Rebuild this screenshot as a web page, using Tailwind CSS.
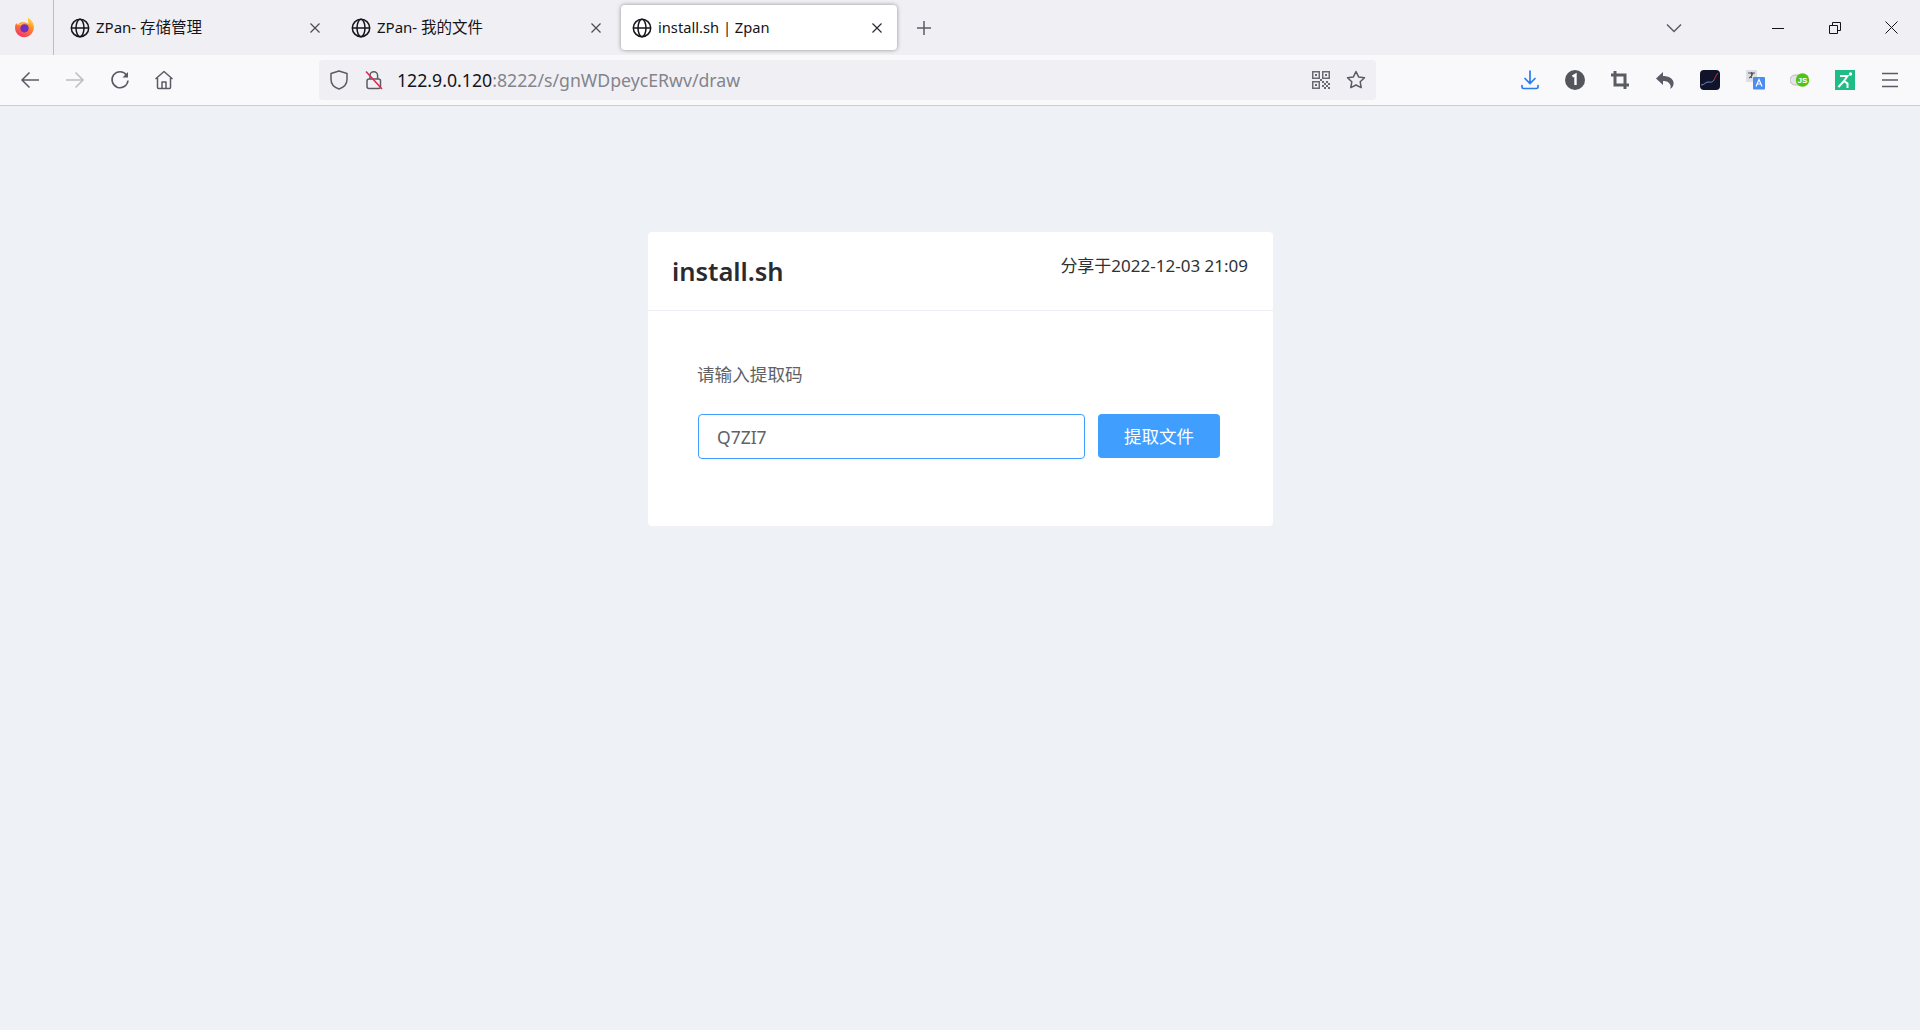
<!DOCTYPE html>
<html lang="en">
<head>
    <meta charset="UTF-8">
    <title>install.sh | Zpan</title>
    <script src="https://cdn.jsdelivr.net/npm/@tailwindcss/browser@4"></script>
</head>
<body class="h-[1030px] overflow-hidden bg-[#eef1f6] font-['Noto_Sans','Noto_Sans_CJK_SC',sans-serif]">
    <!-- tab strip -->
    <div class="flex h-[55px] items-center bg-[#f0f0f4] text-[14.700px] text-[#15141a]">
        <div class="flex h-full w-[54px] shrink-0 items-center justify-center border-r border-[#bdbdc2] pr-[4px]">
            <svg width="21" height="21" viewBox="0 0 20 20">
                <defs>
                    <linearGradient id="fx" x1="0.75" y1="0" x2="0.25" y2="1"><stop offset="0" stop-color="#ffe14a"/><stop offset="0.4" stop-color="#ff8a2a"/><stop offset="1" stop-color="#f2306c"/></linearGradient>
                </defs>
                <path d="M13.500 .5c2.500 1.600 3.800 3.400 4.700 5.500 1 2.400 1 5 0 7.300-1.400 3.500-4.600 5.900-8.400 5.900-4.800 0-8.800-3.800-8.800-8.900 0-1.700.4-3.300 1.200-4.600.3 1 .8 1.600 1.400 2 .6-1.400 2.200-2.400 3.900-2.600 1.800-.3 4.500-.2 6.500 1.700-.4-2-1.200-3.500-.5-6.300z" fill="url(#fx)"/>
                <circle cx="10" cy="10.800" r="3.900" fill="#6f2fc4"/>
                <path d="M3.800 7.300c1.500-1.500 4-2 6.300-1.200-1.800.2-2.900 1-3.200 2-.9.200-2 0-3.100-.8z" fill="#ffb52e"/>
            </svg>
        </div>
        <div class="ml-[5px] flex gap-[5px]">
            <div class="flex h-[45px] w-[276px] items-center pl-[11px] pr-[14px]">
                <svg class="shrink-0" width="20" height="20" viewBox="0 0 20 20" fill="none" stroke="#15141a" stroke-width="1.500"><circle cx="10" cy="10" r="8.700"/><ellipse cx="10" cy="10" rx="4" ry="8.700"/><path d="M1.500 10h17"/></svg>
                <span class="ml-[6px] flex-1 truncate text-[15px]">ZPan- <span class="text-[15.500px]">存储管理</span></span>
                <svg class="shrink-0" width="12" height="12" viewBox="0 0 12 12" stroke="#4a4a50" stroke-width="1.200"><path d="M1.500 1.500l9 9M10.500 1.500l-9 9"/></svg>
            </div>
            <div class="flex h-[45px] w-[276px] items-center pl-[11px] pr-[14px]">
                <svg class="shrink-0" width="20" height="20" viewBox="0 0 20 20" fill="none" stroke="#15141a" stroke-width="1.500"><circle cx="10" cy="10" r="8.700"/><ellipse cx="10" cy="10" rx="4" ry="8.700"/><path d="M1.500 10h17"/></svg>
                <span class="ml-[6px] flex-1 truncate text-[15px]">ZPan- <span class="text-[15.500px]">我的文件</span></span>
                <svg class="shrink-0" width="12" height="12" viewBox="0 0 12 12" stroke="#4a4a50" stroke-width="1.200"><path d="M1.500 1.500l9 9M10.500 1.500l-9 9"/></svg>
            </div>
            <div class="flex h-[45px] w-[276px] items-center rounded-[4px] bg-white pl-[11px] pr-[14px] shadow-[0_0_4px_rgba(0,0,0,0.4)]">
                <svg class="shrink-0" width="20" height="20" viewBox="0 0 20 20" fill="none" stroke="#15141a" stroke-width="1.500"><circle cx="10" cy="10" r="8.700"/><ellipse cx="10" cy="10" rx="4" ry="8.700"/><path d="M1.500 10h17"/></svg>
                <span class="ml-[6px] flex-1 truncate">install.sh | Zpan</span>
                <svg class="shrink-0" width="12" height="12" viewBox="0 0 12 12" stroke="#2b2a33" stroke-width="1.200"><path d="M1.500 1.500l9 9M10.500 1.500l-9 9"/></svg>
            </div>
        </div>
        <svg class="ml-[19px] shrink-0" width="16" height="16" viewBox="0 0 16 16" stroke="#5b5b66" stroke-width="1.500"><path d="M8 1v14M1 8h14"/></svg>
        <svg class="ml-[734px] shrink-0" width="16" height="10" viewBox="0 0 16 10" fill="none" stroke="#5b5b66" stroke-width="1.500"><path d="M1 1.500l7 7 7-7"/></svg>
        <svg class="ml-[90px] shrink-0" width="12" height="12" viewBox="0 0 12 12" stroke="#15141a" stroke-width="1"><path d="M0 6.500h12"/></svg>
        <svg class="ml-[45px] shrink-0" width="12" height="12" viewBox="0 0 12 12" fill="none" stroke="#15141a" stroke-width="1"><path d="M.5 3.500h8v8h-8zM3.500 3V.5h8v8H9"/></svg>
        <svg class="ml-[44px] shrink-0" width="13" height="13" viewBox="0 0 13 13" stroke="#15141a" stroke-width="1"><path d="M.5.500l12 12M12.500.500l-12 12"/></svg>
    </div>

    <!-- toolbar -->
    <div class="flex h-[51px] items-center border-b border-[#cccccf] bg-[#f9f9fb]">
        <div class="flex w-[319px] shrink-0 items-center pl-[20px]">
            <svg width="20" height="20" viewBox="0 0 20 20" fill="none" stroke="#5b5b66" stroke-width="1.500"><path d="M19 10H2M9.500 2.500L2 10l7.500 7.500"/></svg>
            <svg class="ml-[25px]" width="20" height="20" viewBox="0 0 20 20" fill="none" stroke="#bdbdc2" stroke-width="1.500"><path d="M1 10h17M10.500 2.500L18 10l-7.500 7.500"/></svg>
            <svg class="ml-[25px]" width="20" height="20" viewBox="0 0 20 20" fill="none" stroke="#5b5b66" stroke-width="1.600"><path d="M16.500 5A8 8 0 1 0 18 10.500"/><path d="M18 2v5.500h-5.500" fill="#5b5b66" stroke="none"/></svg>
            <svg class="ml-[24px]" width="20" height="20" viewBox="0 0 20 20" fill="none" stroke="#5b5b66" stroke-width="1.500" stroke-linejoin="round"><path d="M1.500 9L10 1.500 18.500 9M3.500 8v9.500a1 1 0 0 0 1 1h11a1 1 0 0 0 1-1V8"/><path d="M8 18.500V12h4v6.500"/></svg>
        </div>
        <div class="flex h-[40px] w-[1057px] shrink-0 items-center rounded-[4px] bg-[#f0f0f4] text-[17.700px] whitespace-nowrap">
            <svg class="ml-[11px] shrink-0" width="18" height="20" viewBox="0 0 18 20" fill="none" stroke="#5b5b66" stroke-width="1.500" stroke-linejoin="round"><path d="M9 1L1 3.500v6c0 4.500 3.500 8 8 9.500 4.500-1.500 8-5 8-9.500v-6z"/></svg>
            <svg class="ml-[17px] shrink-0" width="18" height="20" viewBox="0 0 18 20" fill="none"><path d="M5 9V5.500a3.800 3.800 0 0 1 7.600 0V9" stroke="#5b5b66" stroke-width="1.500"/><rect x="2" y="9" width="13.500" height="9.500" rx="2" stroke="#5b5b66" stroke-width="1.500"/><path d="M1 1.500L17 19" stroke="#e22850" stroke-width="1.600"/></svg>
            <span class="ml-[14px] text-[#15141a]">122.9.0.120<span class="text-[#84848c]">:8222/s/gnWDpeycERwv/draw</span></span>
            <svg class="ml-auto shrink-0" width="18" height="18" viewBox="0 0 18 18" fill="#6a6a72"><path fill-rule="evenodd" d="M0 0h8v8H0zM1.500 1.500v5h5v-5zM10 0h8v8h-8zM11.500 1.500v5h5v-5zM0 10h8v8H0zM1.500 11.500v5h5v-5z"/><path d="M3 3h2v2H3zM13 3h2v2h-2zM3 13h2v2H3zM10 10h2v2h-2zM14 10h2v2h-2zM12 12h2v2h-2zM16 12h2v2h-2zM10 14h2v2h-2zM14 14h2v2h-2zM12 16h2v2h-2zM16 16h2v2h-2zM8 8h2v2H8z"/></svg>
            <svg class="ml-[16px] mr-[10px] shrink-0" width="20" height="20" viewBox="0 0 20 20" fill="none" stroke="#5b5b66" stroke-width="1.500" stroke-linejoin="round"><path d="M10 1.500l2.600 5.400 5.900.8-4.300 4.100 1 5.900L10 15l-5.200 2.700 1-5.900-4.300-4.100 5.900-.8z"/></svg>
        </div>
        <div class="ml-[144px] flex items-center gap-[25px]">
            <svg width="20" height="20" viewBox="0 0 20 20" fill="none" stroke="#2a7cec" stroke-width="1.700" stroke-linecap="round"><path d="M10 1v12M5 8.500l5 5 5-5M2 15.500v1.500a1.500 1.500 0 0 0 1.500 1.500h13a1.500 1.500 0 0 0 1.500-1.500v-1.500"/></svg>
            <svg width="20" height="20" viewBox="0 0 20 20"><circle cx="10" cy="10" r="10" fill="#55555e"/><path d="M7.500 6.500L10.500 4.800V15" fill="none" stroke="#fff" stroke-width="2.400"/></svg>
            <svg width="20" height="20" viewBox="0 0 20 20" fill="none" stroke="#5b5b66" stroke-width="3"><path d="M5 1v14h14M1 5h14v14"/></svg>
            <svg width="20" height="20" viewBox="0 0 20 20" fill="#5b5b66"><path d="M8 2L1 8.500 8 15v-4c3.500 0 6 .8 7.500 4.500.3 1 .2 2.500-.5 3.500 3-1.500 4-4.500 3.500-7C17.500 8 13 6 8 6z"/></svg>
            <svg width="20" height="20" viewBox="0 0 20 20"><rect width="20" height="20" rx="4" fill="#10132a"/><path d="M1 15c4 0 4-3 7-3s4 1 6-2" fill="none" stroke="#6d90c8" stroke-width="1"/><path d="M14 10c1-2 2-5 4-7" fill="none" stroke="#d8352a" stroke-width="1"/></svg>
            <svg width="20" height="20" viewBox="0 0 20 20"><rect x="1" y="0" width="11" height="12" fill="#dfe0e3"/><path d="M3 3h7M6.500 2v6M4 8c2-1 3-2 4-5" fill="none" stroke="#55555e" stroke-width="1.200"/><rect x="8" y="7" width="12" height="12.500" rx="1" fill="#4a8cf0"/><path d="M11 16.500l3-7 3 7M12 14h4" fill="none" stroke="#fff" stroke-width="1.200"/></svg>
            <svg width="20" height="20" viewBox="0 0 20 20"><rect x="0" y="5" width="16" height="10" rx="5" fill="#e3e3e6" stroke="#bdbdc2"/><circle cx="12.500" cy="10" r="6.700" fill="#4fc414"/><text x="12.500" y="13" text-anchor="middle" font-size="8" font-weight="700" fill="#fff" font-family="Liberation Sans">JS</text></svg>
            <svg width="20" height="20" viewBox="0 0 20 20"><rect width="20" height="20" fill="#1fbd85"/><circle cx="15.500" cy="4" r="1.700" fill="#fff"/><path d="M5 6h7.500L9 11l3.500 2.500v4.500M9 11l-5.500 6" fill="none" stroke="#fff" stroke-width="2"/></svg>
            <svg width="20" height="20" viewBox="0 0 20 20" stroke="#5b5b66" stroke-width="1.500"><path d="M2 3.500h16M2 10h16M2 16.500h16"/></svg>
        </div>
    </div>

    <!-- share card -->
    <main class="ml-[648px] mt-[126px] w-[625px] rounded-[4px] bg-white">
        <div class="flex h-[79px] justify-between border-b border-[#ebeef5] pl-[24px] pr-[25px]">
            <h1 class="mt-[20px] text-[25.500px] leading-[38px] font-semibold text-[#2a2b2f]">install.sh</h1>
            <span class="mt-[22px] text-[17px] leading-[24px] text-[#303133]">分享于2022-12-03 21:09</span>
        </div>
        <div class="px-[49px] pt-[50px] pb-[67px]">
            <label class="block text-[17.600px] leading-[26px] text-[#606266]">请输入提取码</label>
            <div class="mt-[27px] flex items-start gap-[13px]">
                <input type="text" value="Q7ZI7" class="ml-[1px] h-[45px] w-[387px] rounded-[4px] border border-[#409eff] px-[18px] text-[17.500px] text-[#606266] outline-none">
                <button class="h-[44px] w-[122px] rounded-[4px] bg-[#409eff] text-[17.500px] text-white">提取文件</button>
            </div>
        </div>
    </main>
</body>
</html>
